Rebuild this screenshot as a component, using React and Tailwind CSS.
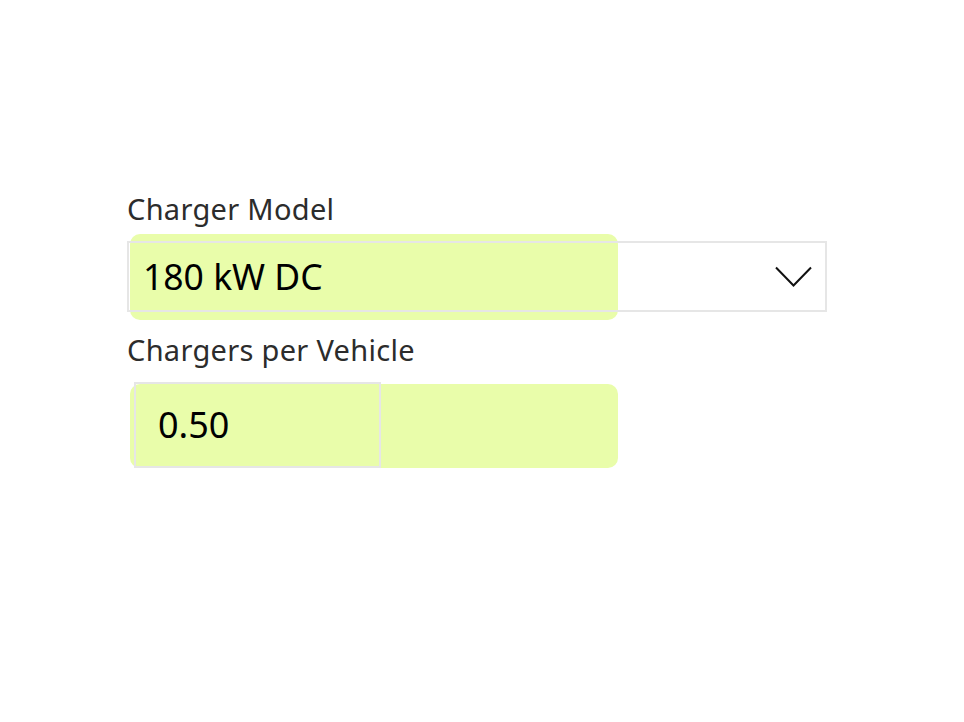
const Highlight = ({ className }) => (
  <div className={`absolute rounded-[10px] bg-[#e9fdaa] ${className}`} />
);

const Chevron = () => (
  <svg width="37" height="22" viewBox="0 0 37 22" fill="none" stroke="#111" strokeWidth="2">
    <polyline points="1,1.5 18.5,19.5 36,1.5" />
  </svg>
);

export default function App() {
  return (
    <div className="min-h-screen w-full bg-white font-['Noto_Sans',sans-serif]">
      <div className="flex flex-col pl-[126px] pt-[191px]">
        {/* Charger model */}
        <label className="pl-[1px] text-[29px] leading-[36px] tracking-[0.3px] text-[#2c2c2c]">Charger Model</label>
        <div className="relative mt-[14px] ml-[1px] h-[71px] w-[700px]">
          <Highlight className="left-[3px] top-[-7px] h-[86px] w-[488px]" />
          <div className="relative flex h-full items-center justify-between border-2 border-[#e6e6e6] pl-[14px] pr-[13px]">
            <span className="text-[35.5px] text-black">180 kW DC</span>
            <Chevron />
          </div>
        </div>

        {/* Chargers per vehicle */}
        <label className="mt-[20px] pl-[1px] text-[29px] leading-[36px] tracking-[0.3px] text-[#2c2c2c]">Chargers per Vehicle</label>
        <div className="relative mt-[14px] ml-[8px] h-[86px] w-[247px]">
          <Highlight className="left-[-4px] top-[2px] h-[84px] w-[488px]" />
          <div className="relative flex h-full items-center border-2 border-[#e6e6e6] pl-[22px]">
            <span className="text-[36px] text-black">0.50</span>
          </div>
        </div>
      </div>
    </div>
  );
}
